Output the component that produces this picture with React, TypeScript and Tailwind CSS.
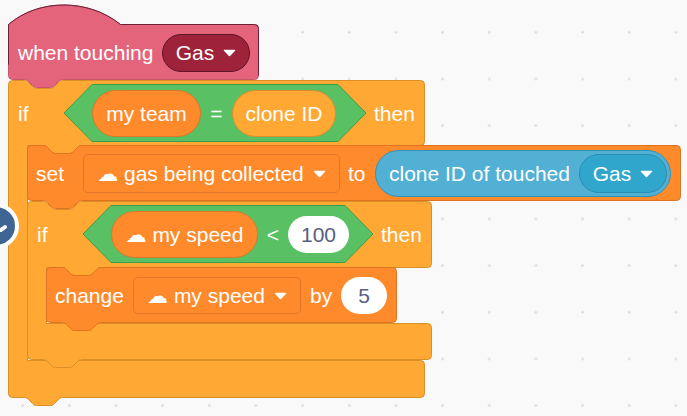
import React from "react";

const NOTCH_R = "c2,0 3,1 4,2 l4,4 c1,1 2,2 4,2 h14 c2,0 3,-1 4,-2 l4,-4 c1,-1 2,-2 4,-2";
const NOTCH_L = "c-2,0 -3,1 -4,2 l-4,4 c-1,1 -2,2 -4,2 h-14 c-2,0 -3,-1 -4,-2 l-4,-4 c-1,-1 -2,-2 -4,-2";

function stackPath(w: number, h: number) {
  return `M0,4 a4,4 0 0 1 4,-4 H16 ${NOTCH_R} H${w - 4} a4,4 0 0 1 4,4 V${h - 4} a4,4 0 0 1 -4,4 H54 ${NOTCH_L} H4 a4,4 0 0 1 -4,-4 Z`;
}

function cPath(w: number, head: number, footTop: number, h: number, footW: number) {
  return `M0,4 a4,4 0 0 1 4,-4 H16 ${NOTCH_R} H${w - 4} a4,4 0 0 1 4,4 V${head - 4} a4,4 0 0 1 -4,4 H73 ${NOTCH_L} H19 V${footTop} H${footW - 4} a4,4 0 0 1 4,4 V${h - 4} a4,4 0 0 1 -4,4 H54 ${NOTCH_L} H4 a4,4 0 0 1 -4,-4 Z`;
}

function Shape({ d, fill, stroke }: { d: string; fill: string; stroke: string }) {
  return (
    <svg className="absolute left-0 top-0 overflow-visible" width="1" height="1">
      <path d={d} fill={fill} stroke={stroke} strokeWidth="1" transform="translate(0.5,0.5)" />
    </svg>
  );
}

function Arrow() {
  return (
    <svg width="13" height="8" viewBox="0 0 14 8" className="ml-[9px] mt-[1px] shrink-0">
      <path d="M1.5,0.5 H12.5 Q13.8,0.5 13,1.6 L8.2,6.8 Q7,8 5.8,6.8 L1,1.6 Q0.2,0.5 1.5,0.5 Z" fill="#fff" />
    </svg>
  );
}

function Hexagon({ w, children }: { w: number; children: React.ReactNode }) {
  const d = `M0,29 L28,0.5 H${w - 28} L${w},29 L${w - 28},57.5 H28 Z`;
  return (
    <div className="relative h-[58px] shrink-0" style={{ width: w }}>
      <svg className="absolute left-0 top-0" width={w} height="58">
        <path d={d} fill="#59C163" stroke="#3F9E4A" strokeWidth="1" />
      </svg>
      <div className="relative flex h-full items-center pl-[28px]">{children}</div>
    </div>
  );
}

function Pill({ w, cls, children }: { w: string; cls: string; children: React.ReactNode }) {
  return <div className={`flex h-[47px] shrink-0 items-center justify-center rounded-full border ${w} ${cls}`}>{children}</div>;
}

export default function App() {
  return (
    <div className="relative h-[416px] w-[687px] overflow-hidden bg-[#F9F9F9] bg-[radial-gradient(circle,#dedede_1px,transparent_1.6px)] bg-[size:46.67px_46.67px] bg-[position:-0.7px_9px] font-['Liberation_Sans','DejaVu_Sans',sans-serif] text-[21px] leading-none text-white">
      <div className="flex flex-col pl-[8px] pt-[4px]">
        {/* hat block */}
        <div className="relative z-10 h-[76px] w-[251px]">
          <svg className="absolute left-0 top-0 overflow-visible" width="1" height="1">
            <g transform="translate(0.5,0.5)">
              <path d={`M0,20 C30,-6 80,-6 112,20 H246 a4,4 0 0 1 4,4 V71 a4,4 0 0 1 -4,4 H54 ${NOTCH_L} H4 a4,4 0 0 1 -4,-4 Z`} fill="#E4647B" stroke="#C4556B" />
              <path d="M0,60 V20 C30,-6 80,-6 112,20 H246 a4,4 0 0 1 4,4 V71" fill="none" stroke="#6E1F35" />
            </g>
          </svg>
          <div className="relative flex h-full items-center pl-[10px] pt-[21px]">
            <span className="w-[144px] shrink-0">when touching</span>
            <div className="flex h-[38px] w-[88px] shrink-0 items-center justify-center rounded-full border border-[#5E1428] bg-[#9E2239]">
              <span>Gas</span>
              <Arrow />
            </div>
          </div>
        </div>

        {/* outer if */}
        <div className="relative flex h-[318px] w-[417px] flex-col">
          <Shape d={cPath(416, 65, 280, 317, 416)} fill="#FFA834" stroke="#D98E26" />
          <div className="relative flex h-[65px] shrink-0 items-center pl-[10px] pt-[1px]">
            <span className="w-[46px] shrink-0">if</span>
            <Hexagon w={302}>
              <Pill w="w-[109px]" cls="border-[#D9782A] bg-[#FF8A2B]">my team</Pill>
              <span className="w-[31px] shrink-0 text-center">=</span>
              <Pill w="w-[104px]" cls="border-[#DB8D2B] bg-[#FFA834]">clone ID</Pill>
            </Hexagon>
            <span className="ml-[8px]">then</span>
          </div>

          <div className="relative flex flex-1 flex-col pl-[19px]">
            {/* set */}
            <div className="relative z-[2] h-[56px] w-[654px]">
              <Shape d={stackPath(653, 55)} fill="#FF8A2B" stroke="#E0731F" />
              <div className="relative flex h-full items-center pl-[9px]">
                <span className="w-[47px] shrink-0">set</span>
                <div className="flex h-[39px] w-[257px] shrink-0 items-center justify-center rounded-[5px] border border-[#E2772A]">
                  <span>☁ gas being collected</span>
                  <Arrow />
                </div>
                <span className="ml-[8px] w-[27px] shrink-0">to</span>
                <div className="flex h-[47px] w-[296px] shrink-0 items-center justify-between rounded-full border border-[#3293B8] bg-[#52B0D4] pl-[13px] pr-[3px]">
                  <span>clone ID of touched</span>
                  <div className="flex h-[39px] w-[88px] shrink-0 items-center justify-center rounded-full border border-[#2A8DB0] bg-[#31A6CD]">
                    <span>Gas</span>
                    <Arrow />
                  </div>
                </div>
              </div>
            </div>

            {/* inner if */}
            <div className="relative flex h-[159px] w-[405px] flex-col">
              <Shape d={cPath(404, 66, 122, 158, 404)} fill="#FFA834" stroke="#D98E26" />
              <div className="relative flex h-[66px] shrink-0 items-center pl-[10px]">
                <span className="w-[46px] shrink-0">if</span>
                <Hexagon w={290}>
                  <Pill w="w-[147px]" cls="border-[#D9782A] bg-[#FF8A2B]">☁ my speed</Pill>
                  <span className="w-[30px] shrink-0 text-center">&lt;</span>
                  <div className="flex h-[37px] w-[61px] shrink-0 items-center justify-center rounded-full bg-white text-[#55607E]">100</div>
                </Hexagon>
                <span className="ml-[8px]">then</span>
              </div>

              {/* change */}
              <div className="relative z-[2] ml-[19px] h-[56px] w-[351px]">
                <Shape d={stackPath(350, 55)} fill="#FF8A2B" stroke="#E0731F" />
                <div className="relative flex h-full items-center pl-[9px]">
                  <span className="w-[78px] shrink-0">change</span>
                  <div className="flex h-[37px] w-[168px] shrink-0 items-center justify-center rounded-[5px] border border-[#E2772A]">
                    <span>☁ my speed</span>
                    <Arrow />
                  </div>
                  <span className="ml-[9px] w-[31px] shrink-0">by</span>
                  <div className="flex h-[37px] w-[46px] shrink-0 items-center justify-center rounded-full bg-white text-[#55607E]">5</div>
                </div>
              </div>
            </div>
          </div>
        </div>
      </div>

      {/* scroll-back badge lying over the canvas edge */}
      <div className="absolute left-[-27px] top-[203px] flex h-[46px] w-[46px] items-center justify-center rounded-full border-[4px] border-white bg-[#3E6593]">
        <svg className="absolute left-[23px] top-[14px]" width="14" height="14" viewBox="0 0 14 14">
          <path d="M1,9 L5,6" stroke="#fff" strokeWidth="4" strokeLinecap="round" fill="none" />
        </svg>
      </div>
    </div>
  );
}
